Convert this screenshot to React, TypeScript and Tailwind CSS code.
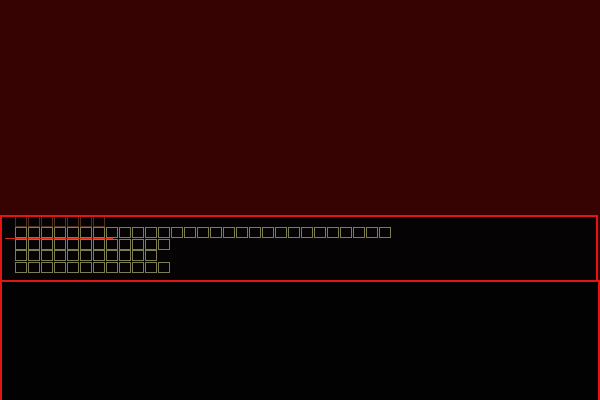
import React from "react";

function Row({ count, dim }: { count: number; dim?: boolean }) {
  return (
    <div className="flex h-[11.4px] gap-[1px]">
      {Array.from({ length: count }).map((_, i) => (
        <span
          key={i}
          className={
            dim
              ? "block h-[11px] w-[12px] shrink-0 border border-[#52301e]"
              : "block h-[11px] w-[12px] shrink-0 border border-[#7d7d4e]"
          }
        />
      ))}
    </div>
  );
}

export default function App() {
  return (
    <div
      className="flex h-[400px] w-[600px] flex-col overflow-hidden bg-[#370202]"
      style={{ fontFamily: '"Liberation Sans", sans-serif' }}
    >
      <div className="h-[215px] shrink-0" />
      <div className="relative h-[65px] w-[598px] shrink-0 overflow-hidden border-x-2 border-t-2 border-[#e51414] bg-[#050303]">
        <div className="-mt-[1px] flex flex-col pl-[13px]">
          <Row count={7} dim />
          <Row count={29} />
          <Row count={12} />
          <Row count={11} />
          <Row count={12} />
        </div>
        <div className="absolute left-[3px] top-[21px] h-[1px] w-[108px] bg-[#d42a14]" />
      </div>
      <div className="flex-1 border-x-2 border-t-2 border-[#e51414] bg-[#030202]" />
    </div>
  );
}
